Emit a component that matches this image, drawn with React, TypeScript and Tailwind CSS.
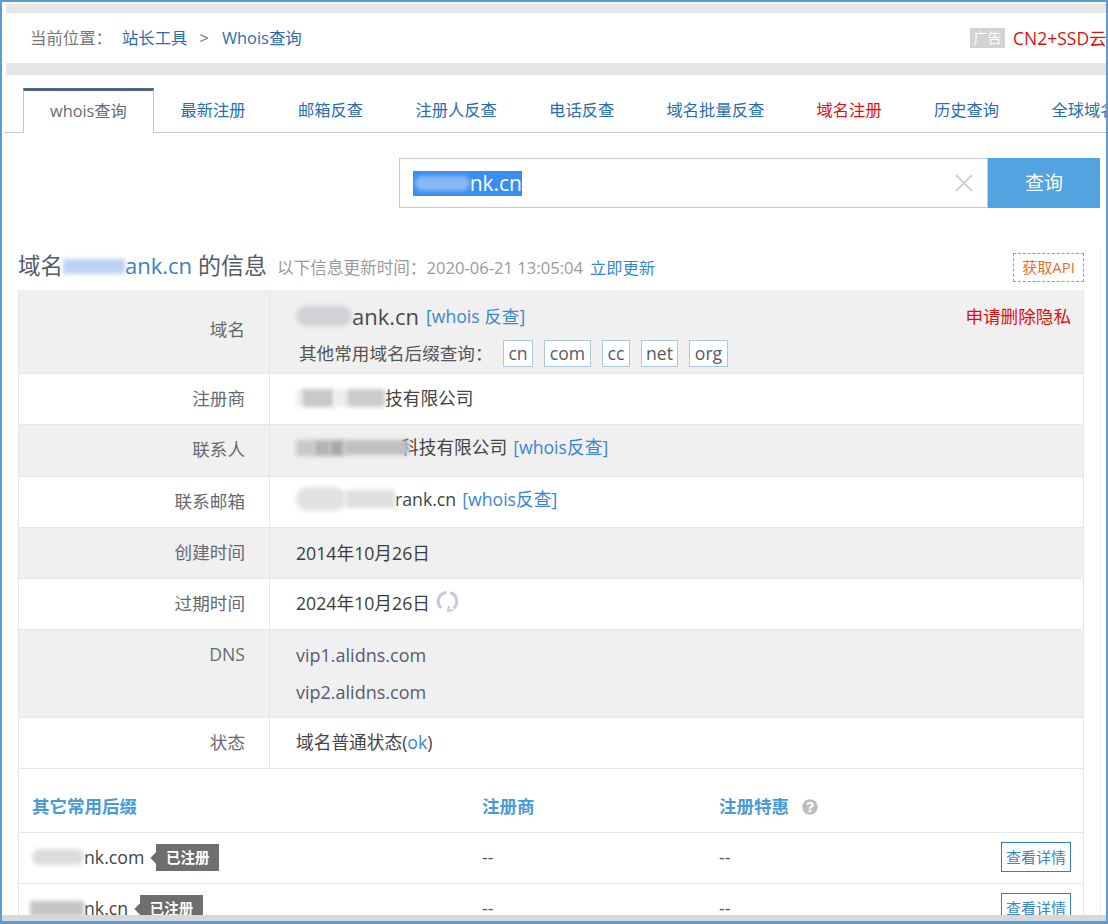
import React from "react";
import { FaQuestionCircle } from "react-icons/fa";

const font = "font-['Open_Sans','Noto_Sans_CJK_SC',sans-serif]";

function Smudge({ w, h = 20, color, className = "" }: { w: number; h?: number; color: string; className?: string }) {
  return (
    <span
      className={`relative z-10 inline-block shrink-0 align-middle blur-[2px] ${color} ${className}`}
      style={{ width: w, height: h }}
    />
  );
}

const tabs = [
  ["最新注册", "text-[#2a6db0]"],
  ["邮箱反查", "text-[#2a6db0]"],
  ["注册人反查", "text-[#2a6db0]"],
  ["电话反查", "text-[#2a6db0]"],
  ["域名批量反查", "text-[#2a6db0]"],
  ["域名注册", "text-[#e01010]"],
  ["历史查询", "text-[#2a6db0]"],
  ["全球域名", "text-[#2a6db0]"],
];

function Row({
  label,
  gray,
  h,
  labelTop = "pt-[11px]",
  children,
}: {
  label: string;
  gray?: boolean;
  h: string;
  labelTop?: string;
  children: React.ReactNode;
}) {
  return (
    <div className={`flex border-b border-[#e6e6e6] ${h} ${gray ? "bg-[#f0f0f0]" : "bg-white"}`}>
      <div className={`w-[251px] shrink-0 border-r border-[#e6e6e6] pr-[24px] text-right text-[17.6px] leading-[26px] text-[#666a70] ${labelTop}`}>
        {label}
      </div>
      <div className="min-w-0 flex-1 pl-[26px] text-[17.7px] text-[#444]">{children}</div>
    </div>
  );
}

function Badge({ children }: { children: React.ReactNode }) {
  return (
    <span className="relative ml-[12px] inline-block h-[27px] w-[63px] shrink-0 bg-[#6e6e6e] text-center text-[14.5px] font-bold leading-[27px] text-white">
      <span className="absolute left-[-4px] top-[10px] h-[8px] w-[8px] rotate-45 bg-[#6e6e6e]" />
      {children}
    </span>
  );
}

function DomainRow({ smudge, name }: { smudge: React.ReactNode; name: string }) {
  return (
    <div className="flex h-[51px] shrink-0 items-center border-b border-[#e6e6e6] pb-[2px] text-[17.7px] text-[#444]">
      <div className="flex w-[463px] shrink-0 items-center pl-[13px]">
        {smudge}
        <span>{name}</span>
        <Badge>已注册</Badge>
      </div>
      <div className="w-[237px] shrink-0 text-[#555]">--</div>
      <div className="text-[#555]">--</div>
      <button className="ml-auto mr-[12px] h-[30px] w-[70px] border border-[#2f7fc8] text-[15px] leading-[28px] text-[#3a85cc]">
        查看详情
      </button>
    </div>
  );
}

export default function App() {
  return (
    <div className={`flex h-[924px] w-[1108px] flex-col overflow-hidden border-x-2 border-b-[3px] border-t-2 border-[#5b9bd0] bg-white ${font}`}>
      <div className="min-h-0 flex-1 overflow-hidden">
        <div className="ml-[4px] mt-[2px] h-[9px] bg-[#e6e6e6]" />
        {/* breadcrumb */}
        <div className="flex h-[50px] items-center overflow-hidden whitespace-nowrap pl-[28px] text-[16.4px]">
          <div className="flex w-[940px] shrink-0 items-center">
            <span className="text-[#777]">当前位置：</span>
            <span className="ml-[10px] text-[#2a6db0]">站长工具</span>
            <span className="ml-[12px] text-[#777]">&gt;</span>
            <span className="ml-[13px] text-[#2a6db0]">Whois查询</span>
          </div>
          <span className="h-[20px] w-[35px] shrink-0 bg-[#d2d2d2] text-center text-[14px] leading-[20px] text-white">广告</span>
          <span className="ml-[8px] shrink-0 text-[17.5px] text-[#e01010]">CN2+SSD云</span>
        </div>
        <div className="ml-[4px] h-[12px] bg-[#e6e6e6]" />
        {/* tabs */}
        <div className="ml-[2px] mt-[13px] flex h-[45px] items-end whitespace-nowrap text-[16.3px]">
          <div className="h-[1px] w-[19px] shrink-0 bg-[#c4c6cc]" />
          <div className="h-[45px] w-[131px] shrink-0 border-x border-t-[3px] border-x-[#c4c6cc] border-t-[#4d6485] bg-white text-center leading-[41px] text-[#666a78]">
            whois查询
          </div>
          <div className="flex h-[45px] min-w-0 flex-1 overflow-hidden border-b border-[#c4c6cc]">
            {tabs.map(([t, c], i) => (
              <div key={t} className={`shrink-0 leading-[44px] ${c} ${i === 0 ? "ml-[26.5px]" : "ml-[52.3px]"}`}>
                {t}
              </div>
            ))}
          </div>
        </div>
        {/* search */}
        <div className="mt-[25px] flex justify-end pr-[6px]">
          <div className="flex h-[50px] w-[589px] items-center border border-[#c6c8d8] pl-[13px] pr-[14px]">
            <span className="flex h-[25px] w-[109px] items-center justify-end overflow-hidden bg-[#3a8ef0] text-[21px] leading-[25px] text-white">
              <Smudge w={55} h={15} color="bg-[#8ab8f5]" className="rounded-full" />
              nk.cn
            </span>
            <svg className="ml-auto" width="18" height="18" viewBox="0 0 18 18" stroke="#cfcfcf" strokeWidth="1.8">
              <path d="M1 1l16 16M17 1L1 17" />
            </svg>
          </div>
          <button className="h-[50px] w-[112px] bg-[#52a3e0] text-[19px] text-white">查询</button>
        </div>
        <div className="mt-[40px] h-[700px] w-[1099px] border-r border-[#eef0f4] pt-[4px]">
          {/* heading */}
          <div className="flex h-[30px] items-center pl-[16px] pr-[16px]">
            <span className="mb-[3px] text-[22.5px] text-[#555b66]">域名</span>
            <Smudge w={62} h={15} color="bg-[#bcd3f2]" className="mb-[2px]" />
            <span className="mb-[3px] text-[22px] text-[#3b7fc4]">ank.cn</span>
            <span className="mb-[3px] ml-[6px] text-[23px] text-[#555b66]">的信息</span>
            <span className="ml-[10px] mt-[3px] text-[16.6px] text-[#9a9a9a]">以下信息更新时间：2020-06-21 13:05:04</span>
            <span className="ml-[7px] mt-[3px] text-[16.3px] text-[#3b86d0]">立即更新</span>
            <span className="ml-auto h-[29px] w-[71px] border border-dashed border-[#e8833a] text-center text-[15px] leading-[27px] text-[#e8702a]">
              获取API
            </span>
          </div>
          {/* table */}
          <div className="ml-[16px] mt-[8px] w-[1066px] border-x border-[#e6e6e6]">
            <Row label="域名" gray h="h-[84px]" labelTop="pt-[26px]">
              <div className="flex h-[50px] items-center justify-between pr-[12px] pt-[2px]">
                <div className="flex items-center">
                  <Smudge w={56} h={20} color="bg-[#d0d2d8]" className="rounded-full" />
                  <span className="text-[22px] text-[#4a4a4a]">ank.cn</span>
                  <span className="ml-[7px] text-[17.6px] text-[#3b86d0]">[whois 反查]</span>
                </div>
                <span className="text-[17.6px] text-[#e01010]">申请删除隐私</span>
              </div>
              <div className="ml-[3px] flex items-center whitespace-nowrap text-[17.6px] text-[#555]">
                <span className="w-[204px]">其他常用域名后缀查询：</span>
                {[
                  ["cn", "w-[30px]"],
                  ["com", "w-[47px]"],
                  ["cc", "w-[28px]"],
                  ["net", "w-[37px]"],
                  ["org", "w-[39px]"],
                ].map(([t, w]) => (
                  <span key={t} className={`mr-[11px] h-[27px] border border-[#a9c9e2] bg-white text-center leading-[25px] text-[#555b66] ${w}`}>
                    {t}
                  </span>
                ))}
              </div>
            </Row>
            <Row label="注册商" h="h-[51px]">
              <div className="flex h-[48px] items-center">
                <Smudge w={6} h={16} color="bg-[#eeeeee]" />
                <Smudge w={32} h={18} color="bg-[#c8c8c8]" />
                <Smudge w={13} h={16} color="bg-[#ececec]" />
                <Smudge w={38} h={18} color="bg-[#cccccc]" />
                <span>技有限公司</span>
              </div>
            </Row>
            <Row label="联系人" gray h="h-[52px]">
              <div className="flex h-[45px] items-center">
                <Smudge w={18} h={16} color="bg-[#c8c8c8]" />
                <Smudge w={16} h={16} color="bg-[#b4b4b4]" />
                <Smudge w={14} h={16} color="bg-[#a8a8a8]" />
                <Smudge w={65} h={15} color="bg-[#c0c0c0]" className="-mr-[8px]" />
                <span>科技有限公司</span>
                <span className="ml-[6px] text-[#3b86d0]">[whois反查]</span>
              </div>
            </Row>
            <Row label="联系邮箱" h="h-[51px]">
              <div className="flex h-[44px] items-center">
                <Smudge w={50} h={24} color="bg-[#e2e2e2]" className="rounded-full" />
                <Smudge w={49} h={18} color="bg-[#dedede]" />
                <span>rank.cn</span>
                <span className="ml-[6px] text-[#3b86d0]">[whois反查]</span>
              </div>
            </Row>
            <Row label="创建时间" gray h="h-[51px]">
              <div className="flex h-[50px] items-center text-[#3c3c3c]">2014年10月26日</div>
            </Row>
            <Row label="过期时间" h="h-[51px]">
              <div className="flex h-[49px] items-center text-[#3c3c3c]">
                2024年10月26日
                <svg className="mb-[5px] ml-[6px]" width="22" height="23" viewBox="0 0 22 23" fill="none" stroke="#c6c9dc" strokeWidth="3">
                  <path d="M10.500 2.500A9 9 0 0 0 5 18" />
                  <path d="M14 2.800A9 9 0 0 1 17.500 18.500" />
                  <path d="M17 20l-5 1 1-5" strokeWidth="2" />
                </svg>
              </div>
            </Row>
            <Row label="DNS" gray h="h-[88px]">
              <div className="pt-[7px] text-[18px] leading-[37px] text-[#555b70]">
                <div>vip1.alidns.com</div>
                <div>vip2.alidns.com</div>
              </div>
            </Row>
            <Row label="状态" h="h-[51px]">
              <div className="flex h-[49px] items-center">
                域名普通状态(<span className="text-[#3b86d0]">ok</span>)
              </div>
            </Row>
            {/* other suffixes */}
            <div className="flex h-[64px] items-center border-b border-[#e6e6e6] pt-[12px] text-[17.5px] font-bold text-[#4a9ad8]">
              <div className="w-[463px] shrink-0 pl-[13px]">其它常用后缀</div>
              <div className="w-[237px] shrink-0">注册商</div>
              <div className="flex items-center">
                注册特惠
                <FaQuestionCircle className="ml-[13px] text-[16px] text-[#bdbdbd]" />
              </div>
            </div>
            <DomainRow name="nk.com" smudge={<Smudge w={52} h={16} color="bg-[#dcdcdc]" className="rounded-full" />} />
            <DomainRow name="nk.cn" smudge={<Smudge w={54} h={15} color="bg-[#c4c4c4]" className="-ml-[2px]" />} />
          </div>
        </div>
      </div>
      <div className="h-[6px] shrink-0 bg-[#d8d8d8]" />
    </div>
  );
}
